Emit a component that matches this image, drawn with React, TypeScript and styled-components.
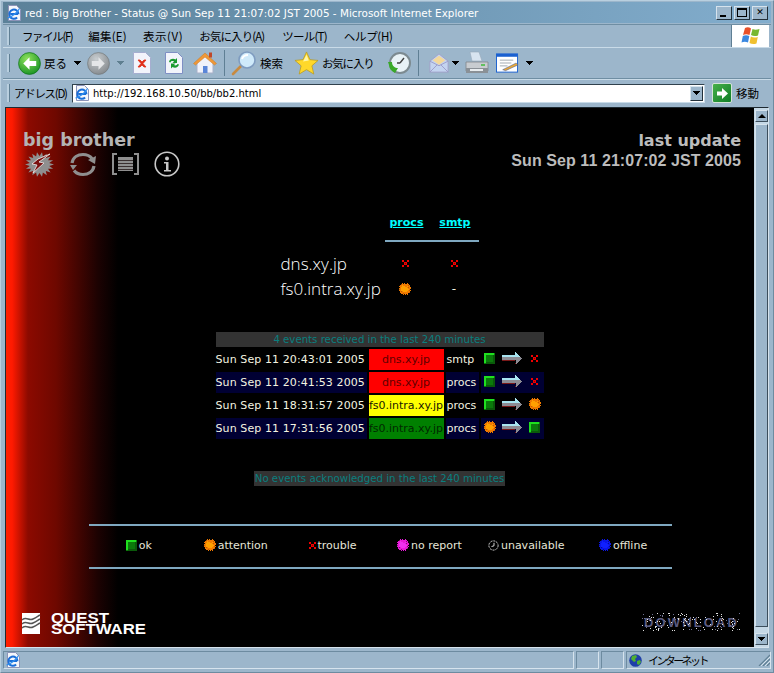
import { ReactNode } from "react";
import styled, { createGlobalStyle } from "styled-components";

const EVENTS = [
  { time: "Sun Sep 11 20:43:01 2005", host: "dns.xy.jp", tone: "red", test: "smtp", from: "ok", to: "trouble" },
  { time: "Sun Sep 11 20:41:53 2005", host: "dns.xy.jp", tone: "red", test: "procs", from: "ok", to: "trouble" },
  { time: "Sun Sep 11 18:31:57 2005", host: "fs0.intra.xy.jp", tone: "yellow", test: "procs", from: "ok", to: "attention" },
  { time: "Sun Sep 11 17:31:56 2005", host: "fs0.intra.xy.jp", tone: "green", test: "procs", from: "attention", to: "ok" },
] as const;

const TONES = {
  red: { bg: "#ff0000", fg: "#5e0000" },
  yellow: { bg: "#ffff00", fg: "#202000" },
  green: { bg: "#008000", fg: "#002a00" },
};

const MENUS = [
  { label: "ファイル(F)", track: -1.4, left: 12 },
  { label: "編集(E)", track: 0.2, left: 16 },
  { label: "表示(V)", track: 0.6, left: 16 },
  { label: "お気に入り(A)", track: -0.9, left: 16 },
  { label: "ツール(T)", track: -0.8, left: 18 },
  { label: "ヘルプ(H)", track: -0.3, left: 17 },
];

type Status = "ok" | "attention" | "trouble" | "noreport" | "unavailable" | "offline";

const BLOB = [
  "...#.#..#...",
  "..o#######..",
  ".##+#####o#.",
  "###+++##+##.",
  ".#++++++#o##",
  "##+++++++###",
  "o#++++++++#.",
  "##+++++++#o#",
  ".#o#++++###.",
  ".#########o.",
  "..##o####...",
  "....#.#.#...",
];

const BLOB_COLORS = {
  attention: { "#": "#f07a00", o: "#c05a00", "+": "#ffa000" },
  noreport: { "#": "#e818d8", o: "#801070", "+": "#f030f0" },
  offline: { "#": "#0a14e8", o: "#060c90", "+": "#1020ff" },
};

// spiky outline of the alert picture
const BURST_POINTS = Array.from({ length: 36 }, (_, i) => {
  const a = (i / 36) * Math.PI * 2;
  const k = i % 2 === 0 ? 1 : 0.68;
  return `${(14.5 + Math.cos(a) * 14.5 * k).toFixed(1)},${(12.5 + Math.sin(a) * 12.5 * k).toFixed(1)}`;
}).join(" ");

const noise = (n: number) => {
  const v = Math.sin(n * 12.9898) * 43758.5453;
  return v - Math.floor(v);
};

const SPECKLES = Array.from({ length: 150 }, (_, i) => ({
  x: Math.floor(noise(i + 1) * 98) + 1,
  y: Math.floor(noise(i + 501) * 18) + 1,
  on: noise(i + 901) > 0.35,
}));

/* =========================
 * little status gifs
 * ========================= */
function Blob({ kind }: { kind: keyof typeof BLOB_COLORS }) {
  const colors: Record<string, string> = BLOB_COLORS[kind];
  return (
    <svg width="12" height="12" viewBox="0 0 12 12" shapeRendering="crispEdges">
      {BLOB.map((row, y) =>
        row.split("").map((c, x) => (c === "." ? null : <rect key={`${x}-${y}`} x={x} y={y} width="1" height="1" fill={colors[c]} />))
      )}
    </svg>
  );
}

function StatusDot({ kind }: { kind: Status }) {
  if (kind === "ok") {
    return (
      <svg width="11" height="11" viewBox="0 0 11 11" shapeRendering="crispEdges">
        <rect width="11" height="11" fill="#0b7a0b" />
        <path d="M0 0h10v2H2v8H0z" fill="#1fe01f" />
        <rect x="9" y="2" width="2" height="9" fill="#0a5a0a" />
        <rect x="2" y="9" width="8" height="2" fill="#0a5a0a" />
      </svg>
    );
  }
  if (kind === "trouble") {
    return (
      <svg width="7" height="7" viewBox="0 0 7 7" shapeRendering="crispEdges">
        <path d="M0 0h2v2H0zM5 0h2v2H5zM2 2h3v3H2zM0 5h2v2H0zM5 5h2v2H5z" fill="#f00000" />
        <rect x="3" y="3" width="1" height="1" fill="#900000" />
      </svg>
    );
  }
  if (kind === "unavailable") {
    return (
      <svg width="11" height="11" viewBox="0 0 11 11">
        <circle cx="5.500" cy="5.500" r="4.600" fill="none" stroke="#d8d8d8" strokeWidth="1" strokeDasharray="2 1" />
        <path d="M6 2.800V5.800L3.500 6.500" fill="none" stroke="#d8d8d8" strokeWidth="1" />
      </svg>
    );
  }
  return <Blob kind={kind} />;
}

function ChangeArrow() {
  return (
    <svg width="20" height="12" viewBox="0 0 20 12" shapeRendering="crispEdges">
      <path d="M0 4h13V0h1v1h1v1h1v1h1v1h1v1h1v1h1v1h-1v1h-1v1h-1v1h-1v1h-1v1h-1V8H0z" fill="#8c8c94" />
      <path d="M0 3h13V0h1v1h1v1h1v1h1v1h1v1h-5V5H0z" fill="#a8e4f0" />
      <path d="M0 8h13v3h1v1h-1V9H0z" fill="#7a1818" />
    </svg>
  );
}

/* =========================
 * toolbar pictures
 * ========================= */
function IeGlyph() {
  return (
    <svg width="15" height="16" viewBox="0 0 15 16">
      <path d="M1.500 .5h8l4 4v11h-12z" fill="#f4f6fb" stroke="#8b93b8" />
      <path d="M3.500 9h7.500M11.500 9.200a4.600 4.600 0 1 0-1.400 3.300" fill="none" stroke="#1a6ed8" strokeWidth="2" />
      <path d="M.5 13c3-.5 10-5 12-9.500" fill="none" stroke="#2f8ff0" strokeWidth="1.200" />
    </svg>
  );
}

function RoundArrow({ dir, on }: { dir: "left" | "right"; on: boolean }) {
  const id = `${dir}-ball`;
  return (
    <svg width="23" height="23" viewBox="0 0 24 24">
      <defs>
        <radialGradient id={id} cx="0.4" cy="0.3" r="0.8">
          <stop offset="0" stopColor={on ? "#8fe25c" : "#c8cdd0"} />
          <stop offset="1" stopColor={on ? "#0f8c1e" : "#7f8488"} />
        </radialGradient>
      </defs>
      <circle cx="12" cy="12" r="11.400" fill={`url(#${id})`} stroke={on ? "#0b6f18" : "#71767a"} strokeWidth="0.7" />
      <path
        d={dir === "left" ? "M12 5.500L5.500 12l6.500 6.500v-4h7v-5h-7z" : "M12 5.500l6.500 6.500-6.500 6.500v-4H5v-5h7z"}
        fill={on ? "#fff" : "#e4e6e8"}
      />
    </svg>
  );
}

function StopIcon() {
  return (
    <svg width="20" height="24" viewBox="0 0 20 24">
      <path d="M1.500 1.500h12l5 5v16h-17z" fill="#f2f4fb" stroke="#a6aed0" />
      <path d="M6 9l2 0 2 2 2-2h2l-3 3.500 3 3.500h-2l-2-2-2 2H6l3-3.500z" fill="#e0301a" stroke="#e0301a" strokeWidth="0.8" />
    </svg>
  );
}

function RefreshIcon() {
  return (
    <svg width="20" height="24" viewBox="0 0 20 24">
      <path d="M1.500 1.500h12l5 5v16h-17z" fill="#f2f4fb" stroke="#7f8fc4" />
      <path d="M5 11c.5-3 4-4 6.500-2.500L13 7v5H8.500l1.500-1.500c-1.500-.8-3-.3-3.500 1z" fill="#1a9a30" />
      <path d="M15 13.500c-.5 3-4 4-6.500 2.500L7 17.500v-5h4.500L10 14c1.500.8 3 .3 3.500-1z" fill="#1a9a30" />
    </svg>
  );
}

function HomeIcon() {
  return (
    <svg width="24" height="24" viewBox="0 0 24 24">
      <path d="M4 11v11h16V11l-8-7z" fill="#f0f2fa" stroke="#a8b0c8" />
      <rect x="10" y="15" width="4.500" height="7" fill="#5a86d8" />
      <path d="M0.500 12.500L12 2l11.500 10.500-2 1.500L12 6 2.500 14z" fill="#f09838" stroke="#c87820" strokeWidth="0.5" />
      <rect x="16" y="1.500" width="3" height="5" fill="#c04828" />
    </svg>
  );
}

function SearchIcon() {
  return (
    <svg width="26" height="26" viewBox="0 0 26 26">
      <path d="M2 24l8-8" stroke="#c88a40" strokeWidth="2.600" strokeLinecap="round" />
      <circle cx="16" cy="10" r="8" fill="#cfeafa" stroke="#7f9cc0" strokeWidth="1.600" />
      <path d="M11 9c1-3 4-4 6-4" stroke="#fff" strokeWidth="2" fill="none" />
    </svg>
  );
}

function StarIcon() {
  return (
    <svg width="25" height="25" viewBox="0 0 26 26">
      <path d="M13 1l3.600 8 8.400.8-6.400 5.600 2 8.600L13 19.400 5.400 24l2-8.600L1 9.800 9.400 9z" fill="#ffd82a" stroke="#b89a20" strokeWidth="0.8" />
      <path d="M13 4l2.400 6-6 1z" fill="#fff6a8" />
    </svg>
  );
}

function HistoryIcon() {
  return (
    <svg width="24" height="24" viewBox="0 0 24 24">
      <circle cx="13" cy="12" r="10" fill="#e8f2f6" stroke="#7c8a90" strokeWidth="2" />
      <path d="M13 12l4-5M13 12h-3" stroke="#404040" strokeWidth="1.400" />
      <path d="M1 11h4c0 4 3 6 6 6l-3 5c-4-2-6-5-6-8z" fill="#38a828" />
    </svg>
  );
}

function MailIcon() {
  return (
    <svg width="20" height="24" viewBox="0 0 22 24">
      <path d="M1 10L11 2l10 8v12H1z" fill="#c4d4f0" stroke="#a0a0c8" />
      <path d="M4 9l7-5 7 5-7 5z" fill="#f4d89a" />
      <path d="M1 22l8-8 2 1 2-1 8 8M1 10l8 4M21 10l-8 4" fill="none" stroke="#9a9ac8" />
    </svg>
  );
}

function PrintIcon() {
  return (
    <svg width="24" height="24" viewBox="0 0 24 24">
      <path d="M5 1h9l3 9H7z" fill="#d8e4f0" stroke="#99aabb" strokeWidth="0.6" />
      <path d="M1 11h22v9H1z" fill="#c8ccd0" stroke="#80868c" strokeWidth="0.8" />
      <path d="M1 17h22v5H1z" fill="#8a9096" />
      <rect x="16" y="13" width="4" height="2" fill="#60c060" />
      <rect x="5" y="18" width="13" height="2" fill="#e8ecef" />
    </svg>
  );
}

function EditIcon() {
  return (
    <svg width="23" height="20" viewBox="0 0 24 20">
      <rect x="0.500" y="0.500" width="22" height="19" fill="#fff" stroke="#1a60d0" />
      <rect x="0.500" y="0.500" width="22" height="3" fill="#1a60d0" />
      <path d="M4 7h14M4 10h12M4 13h8" stroke="#a0a8b0" />
      <path d="M7 17l14-7 2 2-13 6z" fill="#e8a838" stroke="#3050a0" strokeWidth="0.5" />
    </svg>
  );
}

function WinFlag() {
  return (
    <svg width="22" height="20" viewBox="0 0 22 20">
      <path d="M5 2c2-1 4-1 6 .5L9.500 9C7.500 8 5 8 3 9z" fill="#e8502a" />
      <path d="M12.500 3c2 1 4 1 7 0l-1.500 6.500c-3 1-5 .5-7-.5z" fill="#78b830" />
      <path d="M2.800 10c2-1 4.500-1 6.500 0L8 16.500c-2-1-4.500-1-6.500 0z" fill="#3a88e0" />
      <path d="M10.800 10.500c2 1 4 1.500 7 .5L16.500 17.500c-3 1-5 .5-7-.5z" fill="#f0c030" />
    </svg>
  );
}

function GlobeIcon() {
  return (
    <svg width="13" height="13" viewBox="0 0 13 13">
      <circle cx="6.500" cy="6.500" r="6.300" fill="#1f3fa8" />
      <path d="M3 2l4-1 1 2-2 2 1 2-2 1-3-3zM8 7l3-1 1 2-2 3-2-1z" fill="#50b030" />
    </svg>
  );
}

function ResizeGrip() {
  return (
    <svg width="12" height="12" viewBox="0 0 12 12">
      <path d="M12 1L1 12M12 5l-7 7M12 9l-3 3" stroke="#5f7f94" strokeWidth="1.200" />
      <path d="M12 3L3 12M12 7l-5 5" stroke="#d6e3ed" strokeWidth="1" />
    </svg>
  );
}

function Caret({ muted }: { muted?: boolean }) {
  return (
    <svg width="7" height="4" viewBox="0 0 7 4" shapeRendering="crispEdges">
      <path d="M0 0h7v1H6v1H5v1H4v1H3V3H2V2H1V1H0z" fill={muted ? "#5f7f90" : "#000"} />
    </svg>
  );
}

/* =========================
 * big brother header / footer pictures
 * ========================= */
function AlertIcon() {
  return (
    <svg width="29" height="25" viewBox="0 0 29 25">
      <polygon points={BURST_POINTS} fill="#8f8f8f" />
      <path d="M25 2L14 10l5 1-11 10 4-8-5-1 6-5z" fill="#7a1010" stroke="#f0f0f0" strokeWidth="0.8" />
    </svg>
  );
}

function CycleIcon() {
  return (
    <svg width="28" height="25" viewBox="0 0 28 25">
      <path d="M3 11C4 5 9 2.500 14 2.500c4 0 7 1.500 9 4" fill="none" stroke="#8f8f8f" strokeWidth="3.200" />
      <path d="M19 8l8-4-1 8z" fill="#8f8f8f" />
      <path d="M25 14c-1 6-6 8.500-11 8.500-4 0-7-1.500-9-4" fill="none" stroke="#8f8f8f" strokeWidth="3.200" />
      <path d="M1 13h7l-4 5z" fill="#8f8f8f" />
    </svg>
  );
}

function BoardIcon() {
  return (
    <svg width="27" height="22" viewBox="0 0 27 22" shapeRendering="crispEdges">
      <path d="M5 1H1v20h4M22 1h4v20h-4" fill="none" stroke="#8f8f8f" strokeWidth="2" />
      <rect x="6" y="4" width="15" height="14" fill="#8f8f8f" />
      <path d="M6 7h15M6 10h15M6 13h15M6 16h15" stroke="#3a3030" />
    </svg>
  );
}

function InfoIcon() {
  return (
    <svg width="26" height="26" viewBox="0 0 26 26">
      <circle cx="13" cy="13" r="11.800" fill="none" stroke="#c8c8c8" strokeWidth="1.600" />
      <circle cx="13" cy="7.500" r="2" fill="#c8c8c8" />
      <path d="M10 11h4.500v8H17v1.600H10V19h2v-6.400h-2z" fill="#c8c8c8" />
    </svg>
  );
}

function QuestLogoArt() {
  return (
    <svg width="126" height="30" viewBox="0 -4 126 30">
      <rect width="18" height="21" fill="#fff" />
      <path
        d="M0 7c4-4 7 1 11-1s5-3 7-4M0 11c4-4 7 1 11-1s5-3 7-4M0 15c4-4 7 1 11-1s5-3 7-4"
        fill="none"
        stroke="#555"
        strokeWidth="1.500"
      />
      <text x="29" y="10" fontFamily="Liberation Sans" fontWeight="700" fontSize="14" fill="#fff" textLength="58" lengthAdjust="spacingAndGlyphs">
        QUEST
      </text>
      <text x="29" y="21" fontFamily="Liberation Sans" fontWeight="700" fontSize="14" fill="#fff" textLength="95" lengthAdjust="spacingAndGlyphs">
        SOFTWARE
      </text>
    </svg>
  );
}

function DownloadArt() {
  return (
    <DownloadSvg width="100" height="20" viewBox="0 0 100 20">
      <text x="3" y="14.500" fontFamily="Liberation Sans" fontWeight="700" fontSize="13" fill="#5c5c80" textLength="93" lengthAdjust="spacing">
        DOWNLOAD
      </text>
      {SPECKLES.map((s, i) => (
        <rect key={i} x={s.x} y={s.y} width="1" height="1" fill={s.on ? "#e0e0e0" : "#707090"} shapeRendering="crispEdges" />
      ))}
    </DownloadSvg>
  );
}

/* =========================
 * page
 * ========================= */
function ToolBtn({ children, label, m, track }: { children: ReactNode; label?: string; m: number; track?: number }) {
  return (
    <ToolItem $m={m}>
      {children}
      {label && <ToolLabel $track={track ?? 0}>{label}</ToolLabel>}
    </ToolItem>
  );
}

const LEGEND: { kind: Status; label: string }[] = [
  { kind: "ok", label: "ok" },
  { kind: "attention", label: "attention" },
  { kind: "trouble", label: "trouble" },
  { kind: "noreport", label: "no report" },
  { kind: "unavailable", label: "unavailable" },
  { kind: "offline", label: "offline" },
];

export default function App() {
  return (
    <>
      <GlobalStyle />
      <Window>
        <TitleBar>
          <IeGlyph />
          <TitleText>red : Big Brother - Status @ Sun Sep 11 21:07:02 JST 2005 - Microsoft Internet Explorer</TitleText>
          <WinButtons>
            <WinBtn>
              <MinGlyph />
            </WinBtn>
            <WinBtn>
              <MaxGlyph />
            </WinBtn>
            <WinBtn>
              <CloseGlyph>✕</CloseGlyph>
            </WinBtn>
          </WinButtons>
        </TitleBar>

        <MenuRow>
          <Grip />
          <MenuItems>
            {MENUS.map((m) => (
              <MenuItem key={m.label} $track={m.track} $left={m.left}>
                {m.label}
              </MenuItem>
            ))}
          </MenuItems>
          <FlagBox>
            <WinFlag />
          </FlagBox>
        </MenuRow>

        <ToolRow>
          <Grip />
          <ToolBtn m={8} label="戻る">
            <RoundArrow dir="left" on />
          </ToolBtn>
          <ToolItem $m={7}>
            <Caret />
          </ToolItem>
          <ToolBtn m={6}>
            <RoundArrow dir="right" on={false} />
          </ToolBtn>
          <ToolItem $m={7}>
            <Caret muted />
          </ToolItem>
          <ToolBtn m={8}>
            <StopIcon />
          </ToolBtn>
          <ToolBtn m={12}>
            <RefreshIcon />
          </ToolBtn>
          <ToolBtn m={9}>
            <HomeIcon />
          </ToolBtn>
          <Sep $m={7} />
          <ToolBtn m={6} label="検索">
            <SearchIcon />
          </ToolBtn>
          <ToolBtn m={11} label="お気に入り" track={-1.2}>
            <StarIcon />
          </ToolBtn>
          <ToolBtn m={13}>
            <HistoryIcon />
          </ToolBtn>
          <Sep $m={7} />
          <ToolBtn m={10}>
            <MailIcon />
          </ToolBtn>
          <ToolItem $m={3}>
            <Caret />
          </ToolItem>
          <ToolBtn m={6}>
            <PrintIcon />
          </ToolBtn>
          <ToolBtn m={7}>
            <EditIcon />
          </ToolBtn>
          <ToolItem $m={7}>
            <Caret />
          </ToolItem>
        </ToolRow>

        <AddressRow>
          <Grip />
          <AddressLabel>アドレス(D)</AddressLabel>
          <AddressField>
            <IeGlyph />
            <AddressText>http://192.168.10.50/bb/bb2.html</AddressText>
            <ComboBtn>
              <Caret />
            </ComboBtn>
          </AddressField>
          <GoBtn>
            <GoIcon>
              <svg width="13" height="13" viewBox="0 0 13 13">
                <path d="M6 1l6 5.500L6 12v-3.500H1v-4h5z" fill="#fff" />
              </svg>
            </GoIcon>
            移動
          </GoBtn>
        </AddressRow>

        <Viewport>
          <Page>
            <Header>
              <Brand>
                <BrandName>big brother</BrandName>
                <BrandIcons>
                  <AlertIcon />
                  <CycleIcon />
                  <BoardIcon />
                  <InfoIcon />
                </BrandIcons>
              </Brand>
              <Updated>
                <UpdatedTitle>last update</UpdatedTitle>
                <UpdatedTime>Sun Sep 11 21:07:02 JST 2005</UpdatedTime>
              </Updated>
            </Header>

            <Matrix>
              <MatrixHead>
                <MatrixLink>procs</MatrixLink>
                <MatrixLink>smtp</MatrixLink>
              </MatrixHead>
              <MatrixRow>
                <HostName>dns.xy.jp</HostName>
                <MatrixCell>
                  <StatusDot kind="trouble" />
                </MatrixCell>
                <MatrixCell>
                  <StatusDot kind="trouble" />
                </MatrixCell>
              </MatrixRow>
              <MatrixRow>
                <HostName>fs0.intra.xy.jp</HostName>
                <MatrixCell>
                  <StatusDot kind="attention" />
                </MatrixCell>
                <MatrixCell>-</MatrixCell>
              </MatrixRow>
            </Matrix>

            <Events>
              <EventsTitle>4 events received in the last 240 minutes</EventsTitle>
              {EVENTS.map((ev, i) => (
                <EventRow key={ev.time}>
                  <EventTime $dark={i % 2 === 1}>{ev.time}</EventTime>
                  <EventHost $tone={ev.tone}>{ev.host}</EventHost>
                  <EventTest $dark={i % 2 === 1}>{ev.test}</EventTest>
                  <EventChange $dark={i % 2 === 1}>
                    <ChangeSlot>
                      <StatusDot kind={ev.from} />
                    </ChangeSlot>
                    <ChangeArrow />
                    <ChangeSlot>
                      <StatusDot kind={ev.to} />
                    </ChangeSlot>
                  </EventChange>
                </EventRow>
              ))}
            </Events>

            <AckNote>No events acknowledged in the last 240 minutes</AckNote>

            <Legend>
              {LEGEND.map((item) => (
                <LegendItem key={item.kind}>
                  <StatusDot kind={item.kind} />
                  {item.label}
                </LegendItem>
              ))}
            </Legend>

            <Footer>
              <QuestLogoArt />
              <DownloadArt />
            </Footer>
          </Page>

          <Scrollbar>
            <ScrollBtn>
              <UpCaret />
            </ScrollBtn>
            <ScrollThumb />
            <ScrollBtn>
              <Caret />
            </ScrollBtn>
          </Scrollbar>
        </Viewport>

        <StatusBar>
          <StatusCell $grow>
            <IeGlyph />
          </StatusCell>
          <StatusCell $w={23} />
          <StatusCell $w={23} />
          <StatusCell $w={145}>
            <GlobeIcon />
            <ZoneText>インターネット</ZoneText>
            <ResizeGrip />
          </StatusCell>
        </StatusBar>
      </Window>
    </>
  );
}

/* =========================
 * styles
 * ========================= */

const GlobalStyle = createGlobalStyle`
  html, body {
    margin: 0;
    padding: 0;
    background: #9cb6cb;
  }
  * {
    box-sizing: border-box;
  }
`;

const Window = styled.div`
  width: 774px;
  height: 673px;
  display: flex;
  flex-direction: column;
  overflow: hidden;
  background: #9cb6cb;
  border: 1px solid #6d8ba0;
  border-top-color: #b9cfdf;
  border-left-color: #b9cfdf;
  font-family: "Noto Sans CJK JP", "Liberation Sans", sans-serif;
  font-size: 12px;
  color: #000;
`;

const TitleBar = styled.div`
  flex: none;
  height: 21px;
  margin: 1px 2px 0;
  padding: 0 3px 0 4px;
  display: flex;
  align-items: center;
  gap: 3px;
  background: linear-gradient(90deg, #5b8199, #82adcd);
`;

const TitleText = styled.div`
  flex: 1;
  color: #fff;
  font-family: "DejaVu Sans", sans-serif;
  font-size: 10.4px;
  white-space: nowrap;
  overflow: hidden;
`;

const WinButtons = styled.div`
  display: flex;
  gap: 2px;
`;

const WinBtn = styled.div`
  width: 16px;
  height: 14px;
  display: flex;
  align-items: center;
  justify-content: center;
  background: #9cb6cb;
  border: 1px solid;
  border-color: #d6e3ed #22303a #22303a #d6e3ed;
`;

const MinGlyph = styled.div`
  width: 6px;
  height: 2px;
  background: #000;
  margin-top: 7px;
  margin-right: 2px;
`;

const MaxGlyph = styled.div`
  width: 10px;
  height: 9px;
  border: 1px solid #000;
  border-top-width: 2px;
`;

const CloseGlyph = styled.span`
  font: bold 9px "DejaVu Sans", sans-serif;
  line-height: 1;
`;

const MenuRow = styled.div`
  flex: none;
  height: 24px;
  display: flex;
  align-items: stretch;
  padding: 0 2px 0 4px;
  margin: 1px 2px 0;
  border-top: 1px solid #6f8ea3;
  border-bottom: 1px solid #c9dbe8;
`;

const Grip = styled.div`
  align-self: center;
  flex: none;
  width: 3px;
  height: 18px;
  background: #b9cfdf;
  border-right: 1px solid #5f7f94;
`;

const MenuItems = styled.div`
  flex: 1;
  display: flex;
  align-items: center;
`;

const MenuItem = styled.span<{ $track: number; $left: number }>`
  margin-left: ${(p) => p.$left}px;
  letter-spacing: ${(p) => p.$track}px;
  white-space: nowrap;
  font-size: 11.5px;
`;

const FlagBox = styled.div`
  width: 38px;
  display: flex;
  align-items: center;
  justify-content: center;
  background: #fff;
  border-left: 1px solid #5f7f94;
`;

const ToolRow = styled.div`
  flex: none;
  height: 31px;
  margin: 0 2px;
  padding-left: 4px;
  display: flex;
  align-items: center;
  border-bottom: 1px solid #6f8ea3;
`;

const ToolItem = styled.div<{ $m: number }>`
  flex: none;
  display: flex;
  align-items: center;
  gap: 3px;
  margin-left: ${(p) => p.$m}px;
`;

const ToolLabel = styled.span<{ $track: number }>`
  font-size: 11.5px;
  letter-spacing: ${(p) => p.$track}px;
  white-space: nowrap;
`;

const Sep = styled.div<{ $m: number }>`
  flex: none;
  width: 1px;
  height: 26px;
  background: #5f7f94;
  margin-left: ${(p) => p.$m}px;
`;

const AddressRow = styled.div`
  flex: none;
  height: 27px;
  margin: 0 2px;
  padding-left: 4px;
  display: flex;
  align-items: center;
  border-top: 1px solid #c9dbe8;
`;

const AddressLabel = styled.span`
  width: 52px;
  margin-left: 4px;
  margin-right: 6px;
  font-size: 11.5px;
  letter-spacing: -1.3px;
  white-space: nowrap;
`;

const AddressField = styled.div`
  flex: none;
  width: 633px;
  height: 19px;
  display: flex;
  align-items: center;
  gap: 3px;
  padding-left: 2px;
  background: #fff;
  border: 1px solid #30414d;
  border-right-color: #c9dbe8;
  border-bottom-color: #c9dbe8;
`;

const AddressText = styled.span`
  flex: 1;
  font-family: "DejaVu Sans", sans-serif;
  font-size: 10px;
`;

const ComboBtn = styled.div`
  width: 13px;
  height: 15px;
  margin-right: 1px;
  display: flex;
  align-items: center;
  justify-content: center;
  background: #9cb6cb;
  border: 1px solid;
  border-color: #d6e3ed #22303a #22303a #d6e3ed;
`;

const GoBtn = styled.div`
  display: flex;
  align-items: center;
  gap: 4px;
  margin-left: 7px;
  font-size: 11.5px;
  white-space: nowrap;
`;

const GoIcon = styled.div`
  width: 20px;
  height: 20px;
  display: flex;
  align-items: center;
  justify-content: center;
  background: linear-gradient(135deg, #47b04a, #0f7d26);
  border: 1px solid #d4e4d8;
  border-radius: 2px;
`;

const Viewport = styled.div`
  flex: none;
  height: 541px;
  margin: 1px 4px 0 4px;
  display: flex;
  border: 1px solid;
  border-color: #1e2a32 #d6e3ed #d6e3ed #1e2a32;
`;

const Page = styled.div`
  flex: 1;
  min-width: 0;
  display: flex;
  flex-direction: column;
  padding: 21px 13px 8px 16px;
  background: linear-gradient(90deg, #ff2000 0, #ff1a00 6px, #8c0a00 22px, #6e0800 50px, #1c0202 92px, #000 112px);
  color: #f4f4e0;
  font-family: "DejaVu Sans", sans-serif;
`;

const Header = styled.div`
  display: flex;
  justify-content: space-between;
  align-items: flex-start;
`;

const Brand = styled.div`
  display: flex;
  flex-direction: column;
`;

const BrandName = styled.div`
  margin-left: 1px;
  font-size: 17.5px;
  font-weight: 700;
  line-height: 22px;
  color: #b4b4b4;
`;

const BrandIcons = styled.div`
  display: flex;
  align-items: center;
  gap: 15px;
  margin-left: 3px;
`;

const Updated = styled.div`
  text-align: right;
  color: #bcbcbc;
  padding-top: 2px;
`;

const UpdatedTitle = styled.div`
  font-size: 16px;
  font-weight: 700;
  line-height: 20px;
`;

const UpdatedTime = styled.div`
  font-family: "Liberation Sans", sans-serif;
  font-size: 16px;
  font-weight: 700;
  line-height: 20px;
  letter-spacing: 0.07px;
`;

const Matrix = styled.div`
  align-self: center;
  margin-top: 38px;
  margin-right: 4px;
  display: flex;
  flex-direction: column;
  align-items: stretch;
`;

const MatrixHead = styled.div`
  align-self: flex-end;
  width: 94px;
  height: 27px;
  display: flex;
  justify-content: space-between;
  padding: 1px 8px 0 5px;
  margin-bottom: 9px;
  border-bottom: 2px solid #7fa8c0;
`;

const MatrixLink = styled.a`
  color: #00ffff;
  font-size: 11px;
  font-weight: 700;
  text-decoration: underline;
`;

const MatrixRow = styled.div`
  height: 25px;
  display: flex;
  align-items: center;
`;

const HostName = styled.div`
  width: 100px;
  font-size: 17px;
  font-family: "Open Sans", sans-serif;
  font-weight: 300;
  color: #fff;
  white-space: nowrap;
`;

const MatrixCell = styled.div`
  width: 49px;
  display: flex;
  justify-content: center;
`;

const Events = styled.div`
  align-self: center;
  width: 328px;
  margin-top: 31px;
  margin-right: 4px;
  display: flex;
  flex-direction: column;
  gap: 2px;
  font-size: 11px;
`;

const EventsTitle = styled.div`
  height: 15px;
  line-height: 15px;
  font-size: 10.2px;
  text-align: center;
  background: #333333;
  color: #0a7f7f;
  white-space: nowrap;
`;

const EventRow = styled.div`
  height: 21px;
  display: flex;
`;

const EventTime = styled.div<{ $dark: boolean }>`
  width: 151px;
  line-height: 21px;
  white-space: nowrap;
  background: ${(p) => (p.$dark ? "#000033" : "transparent")};
  letter-spacing: 0.1px;
`;

const EventHost = styled.div<{ $tone: keyof typeof TONES }>`
  width: 75px;
  margin-left: 2px;
  line-height: 21px;
  text-align: center;
  white-space: nowrap;
  overflow: hidden;
  background: ${(p) => TONES[p.$tone].bg};
  color: ${(p) => TONES[p.$tone].fg};
`;

const EventTest = styled.div<{ $dark: boolean }>`
  width: 33px;
  margin-left: 2px;
  padding-left: 1px;
  line-height: 21px;
  background: ${(p) => (p.$dark ? "#000033" : "transparent")};
`;

const EventChange = styled.div<{ $dark: boolean }>`
  flex: 1;
  margin-left: 2px;
  padding: 0 3px 3px;
  display: flex;
  align-items: center;
  justify-content: space-between;
  background: ${(p) => (p.$dark ? "#000033" : "transparent")};
`;

const ChangeSlot = styled.div`
  width: 12px;
  display: flex;
  justify-content: center;
`;

const AckNote = styled.div`
  align-self: center;
  margin-top: 32px;
  margin-right: 4px;
  height: 15px;
  line-height: 15px;
  padding: 0 1px;
  font-size: 10.2px;
  background: #333333;
  color: #0a7f7f;
  white-space: nowrap;
`;

const Legend = styled.div`
  align-self: center;
  width: 583px;
  height: 45px;
  margin-top: 38px;
  margin-right: 3px;
  padding: 0 0 3px 2px;
  display: grid;
  grid-template-columns: repeat(6, 1fr);
  align-items: center;
  justify-items: center;
  border-top: 2px solid #7fa8c0;
  border-bottom: 2px solid #7fa8c0;
`;

const LegendItem = styled.div`
  display: flex;
  align-items: center;
  gap: 2px;
  font-size: 11px;
  color: #e6e6d8;
  white-space: nowrap;
`;

const Footer = styled.div`
  margin-top: auto;
  display: flex;
  justify-content: space-between;
  align-items: flex-start;
`;

const DownloadSvg = styled.svg`
  margin-top: 3px;
`;

const Scrollbar = styled.div`
  flex: none;
  width: 14px;
  padding: 2px 0 2px 1px;
  display: flex;
  flex-direction: column;
  gap: 2px;
  background: #c5d8e6;
`;

const ScrollBtn = styled.div`
  flex: none;
  height: 12px;
  display: flex;
  align-items: center;
  justify-content: center;
  background: #9cb6cb;
  border: 1px solid;
  border-color: #d6e3ed #3c4e5c #3c4e5c #d6e3ed;
`;

const UpCaret = styled.div`
  width: 0;
  height: 0;
  border-left: 4px solid transparent;
  border-right: 4px solid transparent;
  border-bottom: 4px solid #000;
`;

const ScrollThumb = styled.div`
  flex: 1;
  margin-bottom: 4px;
  background: #9cb6cb;
  border: 1px solid;
  border-color: #d6e3ed #3c4e5c #3c4e5c #d6e3ed;
`;

const StatusBar = styled.div`
  flex: 1;
  margin: 3px 2px 4px;
  display: flex;
  gap: 2px;
`;

const StatusCell = styled.div<{ $grow?: boolean; $w?: number }>`
  flex: ${(p) => (p.$grow ? "1" : "none")};
  width: ${(p) => (p.$w ? `${p.$w}px` : "auto")};
  display: flex;
  align-items: center;
  gap: 6px;
  padding-left: 2px;
  font-size: 11px;
  border: 1px solid;
  border-color: #6d8ba0 #d6e3ed #d6e3ed #6d8ba0;
`;

const ZoneText = styled.span`
  flex: 1;
  letter-spacing: -2.6px;
  white-space: nowrap;
`;
